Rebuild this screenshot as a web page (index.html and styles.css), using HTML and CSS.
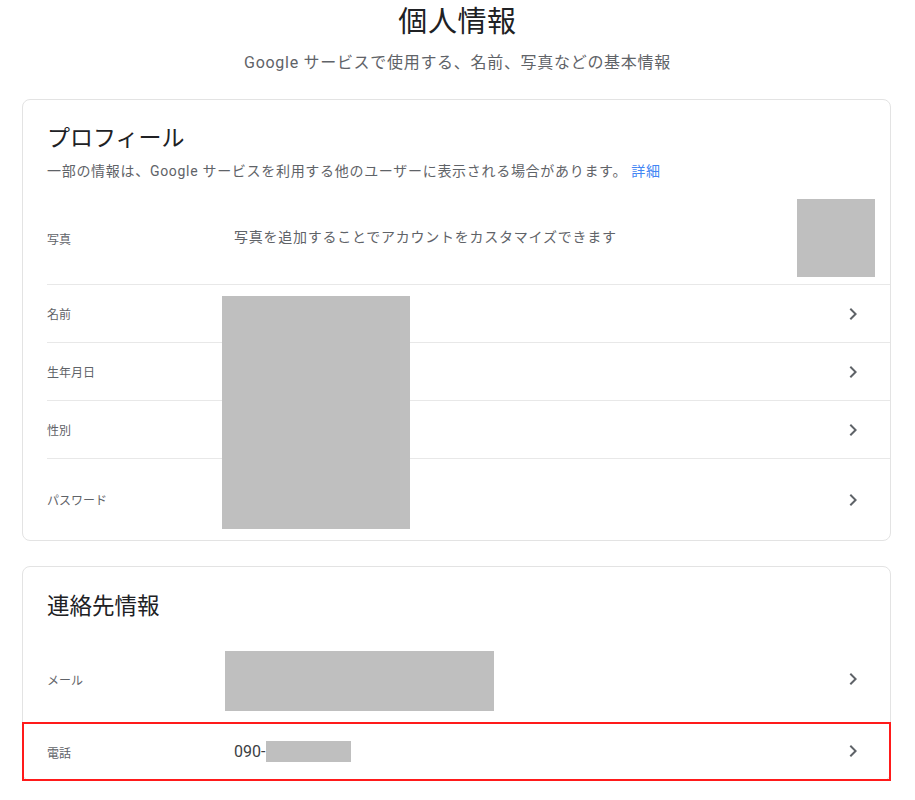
FILE: index.html
```html
<!DOCTYPE html>
<html lang="ja">
<head>
<meta charset="utf-8">
<title>個人情報</title>
<link rel="stylesheet" href="styles.css">
</head>
<body>
<header class="page-head">
  <h1 class="page-title">個人情報</h1>
  <p class="page-sub">Google サービスで使用する、名前、写真などの基本情報</p>
</header>

<section class="card">
  <div class="card-head">
    <h2 class="card-title">プロフィール</h2>
    <p class="card-desc">一部の情報は、Google サービスを利用する他のユーザーに表示される場合があります。 <a class="link" href="#">詳細</a></p>
  </div>
  <div class="row row-photo">
    <span class="label">写真</span>
    <span class="value value-wide">写真を追加することでアカウントをカスタマイズできます</span>
    <span class="photo"></span>
  </div>
  <div class="row row-std">
    <span class="label">名前</span>
    <span class="value"></span>
    <svg class="chev" viewBox="0 0 24 24"><path d="M10 6L8.59 7.41 13.17 12l-4.58 4.59L10 18l6-6z"/></svg>
  </div>
  <div class="row row-std">
    <span class="label">生年月日</span>
    <span class="value"></span>
    <svg class="chev" viewBox="0 0 24 24"><path d="M10 6L8.59 7.41 13.17 12l-4.58 4.59L10 18l6-6z"/></svg>
  </div>
  <div class="row row-std">
    <span class="label">性別</span>
    <span class="value"></span>
    <svg class="chev" viewBox="0 0 24 24"><path d="M10 6L8.59 7.41 13.17 12l-4.58 4.59L10 18l6-6z"/></svg>
  </div>
  <div class="row row-tall">
    <span class="label">パスワード</span>
    <span class="value"></span>
    <svg class="chev" viewBox="0 0 24 24"><path d="M10 6L8.59 7.41 13.17 12l-4.58 4.59L10 18l6-6z"/></svg>
  </div>
  <div class="redact redact-profile"></div>
</section>

<section class="card card-contact">
  <div class="card-head">
    <h2 class="card-title card-title-sm">連絡先情報</h2>
  </div>
  <div class="row row-mail">
    <span class="label">メール</span>
    <span class="value"></span>
    <svg class="chev" viewBox="0 0 24 24"><path d="M10 6L8.59 7.41 13.17 12l-4.58 4.59L10 18l6-6z"/></svg>
  </div>
  <div class="row row-phone">
    <span class="label">電話</span>
    <span class="value value-phone">090-<span class="redact-inline"></span></span>
    <svg class="chev" viewBox="0 0 24 24"><path d="M10 6L8.59 7.41 13.17 12l-4.58 4.59L10 18l6-6z"/></svg>
  </div>
  <div class="redact redact-mail"></div>
</section>
</body>
</html>
```

FILE: styles.css
```css
* { box-sizing: border-box; }

body {
  margin: 0;
  background: #ffffff;
  font-family: Roboto, "Noto Sans CJK JP", "Noto Sans", sans-serif;
  color: #202124;
}

.page-head {
  text-align: center;
  padding-top: 2px;
}

.page-title {
  margin: 0;
  font-size: 29px;
  letter-spacing: 0.6px;
  font-weight: 400;
  line-height: 40px;
  color: #202124;
}

.page-sub {
  margin: 0;
  margin-top: 2px;
  font-size: 16px;
  letter-spacing: 0.7px;
  line-height: 38px;
  color: #5f6368;
}

.card {
  position: relative;
  margin: 17px 24px 0 22px;
  border: 1px solid #e3e3e3;
  border-radius: 8px;
  background: #fff;
}

.card-head {
  padding: 23px 24px 0 24px;
}

.card-title {
  margin: 0;
  font-size: 23px;
  font-weight: 400;
  line-height: 32px;
  color: #202124;
}

.card-title-sm {
  font-size: 22.5px;
}

.card-desc {
  margin: 6px 0 0 0;
  font-size: 14px;
  letter-spacing: 0.7px;
  line-height: 20px;
  color: #5f6368;
}

.link {
  color: #4285f4;
  text-decoration: none;
}

.row {
  display: flex;
  align-items: center;
  margin-left: 24px;
  padding-right: 26px;
}

.row + .row {
  border-top: 1px solid #e8e8e8;
}

.label {
  width: 187px;
  flex: none;
  font-size: 12px;
  color: #5f6368;
}

.value {
  flex: 1;
  font-size: 14px;
  color: #5f6368;
}

.value-wide {
  letter-spacing: 0.75px;
}

.row-photo {
  padding-top: 18px;
  padding-bottom: 7px;
  padding-right: 15px;
}

.row-photo .label { position: relative; top: 0; }
.row-photo .value { position: relative; top: -2px; }

.photo {
  width: 78px;
  height: 78px;
  background: #bfbfbf;
  flex: none;
}

.row-std { height: 58px; }
.row-tall { height: 82px; }

.chev {
  width: 24px;
  height: 24px;
  fill: #5f6368;
  flex: none;
  position: relative;
  left: 1px;
}

.redact {
  position: absolute;
  background: #bfbfbf;
}

.redact-profile {
  left: 199px;
  top: 196px;
  width: 188px;
  height: 233px;
}

.card-contact {
  margin-top: 25px;
  padding-bottom: 0;
}

.row-mail {
  height: 82px;
  margin-top: 18px;
}

.row-mail .label { position: relative; top: -2px; }
.row-mail .chev { top: -2px; }

.redact-mail {
  left: 202px;
  top: 84px;
  width: 269px;
  height: 60px;
}

.row-phone {
  position: relative;
  height: 58px;
}

.row-phone::after {
  content: "";
  position: absolute;
  left: -25px;
  right: -1px;
  top: -1px;
  bottom: -1px;
  border: 2px solid #ff1a1a;
}

.row-phone .label { position: relative; top: 1px; }
.row-phone .chev { top: -1px; }

.value-phone {
  display: flex;
  align-items: center;
  font-size: 16px;
  color: #3c4043;
}

.redact-inline {
  display: inline-block;
  width: 85px;
  height: 21px;
  margin-left: 1px;
  background: #bfbfbf;
}
```
